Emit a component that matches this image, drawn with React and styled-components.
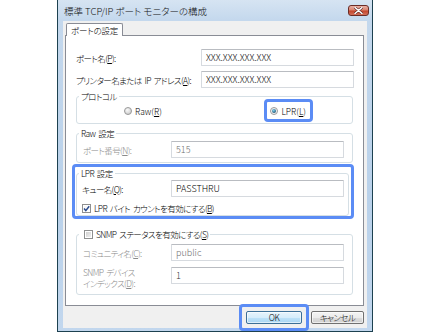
import React from 'react'
import styled, { createGlobalStyle } from 'styled-components'

const GlobalStyle = createGlobalStyle`
  html, body {
    margin: 0;
    padding: 0;
    background: #fff;
  }
  body {
    font-family: "Noto Sans CJK JP", "Noto Sans", sans-serif;
    font-size: 8.5px;
    letter-spacing: -0.6px;
    word-spacing: 1.5px;
    font-feature-settings: "palt";
    font-weight: 300;
    color: #000;
    white-space: nowrap;
  }
`

const Page = styled.div`
  width: 430px;
  height: 333px;
  overflow: hidden;
  padding-left: 57px;
  box-sizing: border-box;
`

const Window = styled.div`
  width: 316px;
  height: 332px;
  box-sizing: border-box;
  border: 1px solid #1d4150;
  border-top: none;
  background: linear-gradient(to bottom, #d6e4f2 0, #c4d8ed 20px, #b9d1ea 60%, #c2d7ee 100%);
  display: flex;
  flex-direction: column;
`

const TitleBar = styled.div`
  height: 21px;
  flex: none;
  display: flex;
  align-items: center;
  justify-content: space-between;
  padding: 0 3px 0 6px;
`

const Title = styled.span`
  font-size: 9.5px;
  letter-spacing: 0;
  word-spacing: 0;
  line-height: 12px;
  color: #111;
`

const CloseButton = styled.div`
  width: 21px;
  height: 11px;
  box-sizing: border-box;
  border: 1px solid #6a2c26;
  border-radius: 3px;
  background: linear-gradient(to bottom, #eab1a6 0%, #d9836f 45%, #c4452c 55%, #d2705a 100%);
  display: flex;
  align-items: center;
  justify-content: center;
`

const Client = styled.div`
  flex: 1;
  margin: 0 5px 3px;
  padding: 2px 3px 0 2px;
  background: #f0f0f0;
  display: flex;
  flex-direction: column;
`

const TabStrip = styled.div`
  display: flex;
  padding-left: 1px;
`

const Tab = styled.div`
  position: relative;
  z-index: 1;
  height: 13px;
  box-sizing: border-box;
  padding: 0 4px;
  line-height: 12px;
  letter-spacing: -0.2px;
  background: #fff;
  border: 1px solid #898c95;
  border-bottom: none;
  border-radius: 2px 2px 0 0;
  margin-bottom: -1px;
`

const Panel = styled.div`
  height: 271px;
  box-sizing: border-box;
  border: 1px solid #898c95;
  background: #fff;
  padding: 13px 9px 0 10px;
  display: flex;
  flex-direction: column;
`

const Row = styled.div`
  display: flex;
  align-items: ${p => (p.$top ? 'flex-start' : 'center')};
  margin-top: ${p => p.$gap || 0}px;
`

const Label = styled.div`
  width: ${p => p.$w}px;
  flex: none;
  line-height: ${p => (p.$lh ? p.$lh : 12)}px;
  margin-top: ${p => p.$mt || 0}px;
  color: ${p => (p.$disabled ? '#8a8a8a' : '#000')};
`

const TextBox = styled.div`
  flex: 1;
  height: 17px;
  box-sizing: border-box;
  border: 1px solid #d6dadf;
  border-top-color: #b9bcc1;
  border-radius: 1px;
  padding: 0 4px;
  display: flex;
  align-items: center;
  font-size: 9px;
  letter-spacing: 0;
  color: ${p => p.$color || '#000'};
  background: #fff;
`

const GroupBox = styled.fieldset`
  margin: ${p => p.$margin || '0'};
  padding: 0;
  height: ${p => p.$h}px;
  box-sizing: border-box;
  border: 1px solid #d5dfe5;
  border-radius: 3px;
  min-width: 0;
`

const Legend = styled.legend`
  margin-left: 2px;
  padding: 0 ${p => p.$pr || 2}px 0 ${p => p.$pl || 2}px;
  line-height: 12px;
  display: flex;
  align-items: center;
  gap: 3px;
`

const GroupBody = styled.div`
  padding: ${p => p.$pad || '0'};
  display: flex;
  flex-direction: column;
`

const RadioRow = styled.div`
  display: flex;
  justify-content: space-between;
  align-items: center;
  margin-top: -3px;
  padding: 0 39px 0 47px;
`

const Option = styled.label`
  display: flex;
  align-items: center;
  gap: 3px;
  line-height: 12px;
  letter-spacing: 0;
`

const Highlight = styled.div`
  border: 3px solid #5b8cf5;
  border-radius: 4px;
  box-sizing: border-box;
  padding: ${p => p.$pad || '0'};
  margin: ${p => p.$margin || '0'};
  height: ${p => (p.$h ? `${p.$h}px` : 'auto')};
  display: flex;
  flex-direction: column;
  justify-content: center;
`

const CheckRow = styled.label`
  display: flex;
  align-items: center;
  gap: 3px;
  line-height: 12px;
  margin-top: ${p => p.$gap || 0}px;
`

const ButtonRow = styled.div`
  display: flex;
  justify-content: flex-end;
  gap: 9px;
  margin-top: 5px;
`

const Button = styled.div`
  width: ${p => p.$w}px;
  height: 13px;
  box-sizing: border-box;
  border: 1px solid ${p => (p.$default ? '#3c6f97' : '#707070')};
  border-radius: 2px;
  background: ${p =>
    p.$default
      ? 'linear-gradient(to bottom, #e7f4fc 0%, #d6edfb 50%, #bfe2f8 51%, #a9d6f3 100%)'
      : 'linear-gradient(to bottom, #f3f3f3 0%, #ebebeb 50%, #dddddd 51%, #cfcfcf 100%)'};
  display: flex;
  align-items: center;
  justify-content: center;
  line-height: 11px;
  box-shadow: inset 0 0 0 1px rgba(255, 255, 255, 0.6);
`

const ButtonFocus = styled.div`
  margin: -7px;
  padding: 4px 4px 3px;
  border: 3px solid #5b8cf5;
  border-radius: 4px;
`

const CloseIcon = () => (
  <svg width="9" height="7" viewBox="0 0 9 7">
    <path d="M1 0.5 L8 6.5 M8 0.5 L1 6.5" stroke="#5a2420" strokeWidth="2.6" strokeLinecap="round" />
    <path d="M1 0.5 L8 6.5 M8 0.5 L1 6.5" stroke="#fff" strokeWidth="1.5" strokeLinecap="round" />
  </svg>
)

const Radio = ({ checked }) => (
  <svg width="8" height="8" viewBox="0 0 8 8">
    <defs>
      <radialGradient id={checked ? 'rOn' : 'rOff'} cx="0.4" cy="0.35" r="0.7">
        <stop offset="0" stopColor={checked ? '#7fd3f0' : '#fafafa'} />
        <stop offset="1" stopColor={checked ? '#1b4e70' : '#c9c9c9'} />
      </radialGradient>
    </defs>
    <circle cx="4" cy="4" r="3.5" fill={checked ? '#f4f4f4' : `url(#rOff)`} stroke="#9a9a9a" strokeWidth="1" />
    {checked && <circle cx="4" cy="4" r="2" fill="url(#rOn)" />}
  </svg>
)

const CheckBox = ({ checked }) => (
  <svg width="9" height="9" viewBox="0 0 9 9">
    <defs>
      <linearGradient id={checked ? 'cOn' : 'cOff'} x1="0" y1="0" x2="1" y2="1">
        <stop offset="0" stopColor={checked ? '#f4f4f4' : '#cfcfcf'} />
        <stop offset="1" stopColor={checked ? '#ffffff' : '#efefef'} />
      </linearGradient>
    </defs>
    <rect x="0.5" y="0.5" width="8" height="8" fill="#fff" stroke="#8e8f8f" />
    <rect x="2" y="2" width="5" height="5" fill={checked ? 'url(#cOn)' : 'url(#cOff)'} />
    {checked && (
      <path d="M2 4.6 L3.8 6.6 L7.2 2.2" fill="none" stroke="#2a4a8c" strokeWidth="1.5" />
    )}
  </svg>
)

export default function App() {
  return (
    <>
      <GlobalStyle />
      <Page>
        <Window>
          <TitleBar>
            <Title>標準 TCP/IP ポート モニターの構成</Title>
            <CloseButton>
              <CloseIcon />
            </CloseButton>
          </TitleBar>
          <Client>
            <TabStrip>
              <Tab>ポートの設定</Tab>
            </TabStrip>
            <Panel>
              <Row>
                <Label $w={125}>
                  ポート名(<u>P</u>):
                </Label>
                <TextBox>XXX.XXX.XXX.XXX</TextBox>
              </Row>
              <Row $gap={5}>
                <Label $w={125}>
                  プリンター名または IP アドレス(<u>A</u>):
                </Label>
                <TextBox>XXX.XXX.XXX.XXX</TextBox>
              </Row>

              <GroupBox $h={34} $margin="2px 1px 0 0">
                <Legend>プロトコル</Legend>
                <RadioRow>
                  <Option>
                    <Radio />
                    <span>
                      Raw(<u>R</u>)
                    </span>
                  </Option>
                  <Highlight $pad="0 4px 0 3px" $h={23}>
                    <Option>
                      <Radio checked />
                      <span>
                        LPR(<u>L</u>)
                      </span>
                    </Option>
                  </Highlight>
                </RadioRow>
              </GroupBox>

              <GroupBox $h={36} $margin="3px 1px 0 0">
                <Legend>Raw 設定</Legend>
                <GroupBody $pad="2px 8px 0 6px">
                  <Row>
                    <Label $w={88} $disabled>
                      ポート番号(<u>N</u>):
                    </Label>
                    <TextBox $color="#6d6d6d">515</TextBox>
                  </Row>
                </GroupBody>
              </GroupBox>

              <Highlight $margin="1px 0 0 -4px" $h={55}>
                <GroupBox $h={49} $margin="0 2px 0 1px">
                  <Legend>LPR 設定</Legend>
                  <GroupBody $pad="1px 4px 0 5px">
                    <Row>
                      <Label $w={89}>
                        キュー名(<u>Q</u>):
                      </Label>
                      <TextBox>PASSTHRU</TextBox>
                    </Row>
                    <CheckRow $gap={5}>
                      <CheckBox checked />
                      <span>
                        LPR バイト カウントを有効にする(<u>B</u>)
                      </span>
                    </CheckRow>
                  </GroupBody>
                </GroupBox>
              </Highlight>

              <GroupBox $h={67} $margin="9px 1px 0 0">
                <Legend $pl={5}>
                  <CheckBox />
                  <span>
                    SNMP ステータスを有効にする(<u>S</u>)
                  </span>
                </Legend>
                <GroupBody $pad="4px 8px 0 6px">
                  <Row>
                    <Label $w={88} $disabled>
                      コミュニティ名(<u>C</u>):
                    </Label>
                    <TextBox $color="#6d6d6d">public</TextBox>
                  </Row>
                  <Row $gap={6} $top>
                    <Label $w={88} $disabled $lh={11}>
                      SNMP デバイス
                      <br />
                      インデックス(<u>D</u>):
                    </Label>
                    <TextBox $color="#333">1</TextBox>
                  </Row>
                </GroupBody>
              </GroupBox>
            </Panel>
            <ButtonRow>
              <ButtonFocus>
                <Button $w={56} $default>
                  OK
                </Button>
              </ButtonFocus>
              <Button $w={53}>キャンセル</Button>
            </ButtonRow>
          </Client>
        </Window>
      </Page>
    </>
  )
}
